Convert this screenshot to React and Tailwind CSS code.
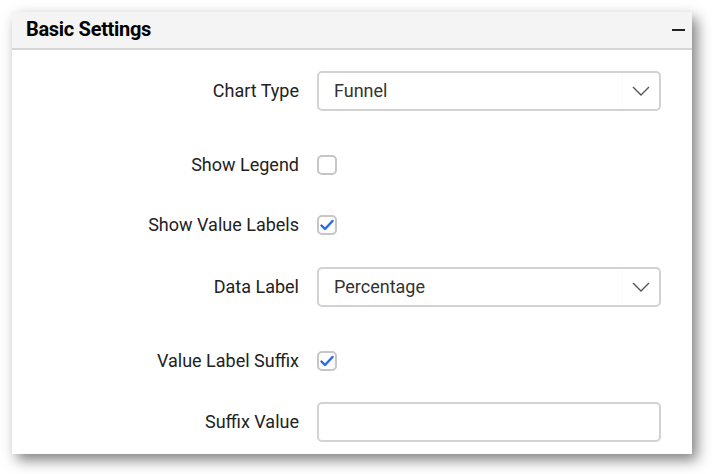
import { useState } from 'react'

function Chevron() {
  return (
    <svg width="18" height="10" viewBox="0 0 18 10" fill="none">
      <path d="M1 1l8 8 8-8" stroke="#555" strokeWidth="1.4" />
    </svg>
  )
}

function Select({ value }) {
  return (
    <div className="flex h-[40px] w-[344px] items-center rounded-[5px] border-2 border-[#d2d2d2] bg-white">
      <div className="flex-1 pl-[15px] text-[18px] leading-[22px] text-[#333]">{value}</div>
      <div className="flex h-full w-[38px] items-center justify-center border-l border-[#fafafa]">
        <Chevron />
      </div>
    </div>
  )
}

function Check({ checked }) {
  return (
    <div className="flex h-[20px] w-[20px] items-center justify-center rounded-[5px] border-2 border-[#c6c6c6] bg-white">
      {checked && (
        <svg width="14" height="12" viewBox="0 0 14 12" fill="none">
          <path d="M1.5 6.5l3.5 3.5 7.5-8" stroke="#2767f0" strokeWidth="2.4" strokeLinecap="round" strokeLinejoin="round" />
        </svg>
      )}
    </div>
  )
}

function Row({ label, children, className = '' }) {
  return (
    <div className={`flex items-center ${className}`}>
      <div className="w-[287px] text-right text-[18px] leading-[20px] text-[#222]">{label}</div>
      <div className="ml-[18px] flex items-center">{children}</div>
    </div>
  )
}

export default function App() {
  const [open] = useState(true)

  return (
    <div className="h-[474px] w-[712px] bg-white p-[12px] font-['Roboto',sans-serif]">
      <div className="w-[680px] bg-white shadow-[5px_6px_13px_rgba(0,0,0,0.5)]">
        <div className="flex h-[38px] items-center justify-between border-b-2 border-[#d6d6d6] bg-[#f4f4f4] pl-[14px] pr-[7px]">
          <span className="mb-[3px] text-[20px] font-bold leading-[24px] tracking-[-0.3px] text-black">Basic Settings</span>
          <span className="mb-[1px] block h-[2px] w-[13px] bg-[#222]" />
        </div>
        {open && (
          <div className="pb-[12px] pt-[21px]">
            <Row label="Chart Type">
              <Select value="Funnel" />
            </Row>
            <Row label="Show Legend" className="mt-[44px]">
              <Check />
            </Row>
            <Row label="Show Value Labels" className="mt-[40px]">
              <Check checked />
            </Row>
            <Row label="Data Label" className="mt-[32px]">
              <Select value="Percentage" />
            </Row>
            <Row label="Value Label Suffix" className="mt-[44px]">
              <Check checked />
            </Row>
            <Row label="Suffix Value" className="mt-[31px]">
              <div className="h-[40px] w-[344px] rounded-[5px] border-2 border-[#d2d2d2] bg-white" />
            </Row>
          </div>
        )}
      </div>
    </div>
  )
}
